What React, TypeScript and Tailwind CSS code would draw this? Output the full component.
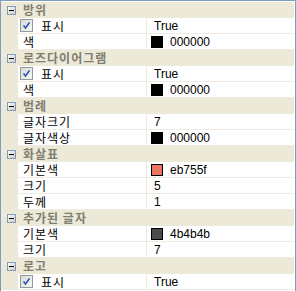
import React from 'react';

type Prop = { name: string; value: string; check?: boolean; color?: string };
type Cat = { title: string; props: Prop[] };

const cats: Cat[] = [
  { title: '방위', props: [{ name: '표시', value: 'True', check: true }, { name: '색', value: '000000', color: '#000000' }] },
  { title: '로즈다이어그램', props: [{ name: '표시', value: 'True', check: true }, { name: '색', value: '000000', color: '#000000' }] },
  { title: '범례', props: [{ name: '글자크기', value: '7' }, { name: '글자색상', value: '000000', color: '#000000' }] },
  {
    title: '화살표',
    props: [
      { name: '기본색', value: 'eb755f', color: '#eb755f' },
      { name: '크기', value: '5' },
      { name: '두께', value: '1' },
    ],
  },
  { title: '추가된 글자', props: [{ name: '기본색', value: '4b4b4b', color: '#4b4b4b' }, { name: '크기', value: '7' }] },
  { title: '로고', props: [{ name: '표시', value: 'True', check: true }] },
];

const font = { fontFamily: '"Noto Sans CJK KR", "Liberation Sans", sans-serif' };

const Minus = () => (
  <svg width="9" height="9" viewBox="0 0 9 9" className="block">
    <defs>
      <linearGradient id="mg" x1="0" y1="0" x2="1" y2="1">
        <stop offset="0" stopColor="#ffffff" />
        <stop offset="1" stopColor="#c9c6b8" />
      </linearGradient>
    </defs>
    <rect x="0.5" y="0.5" width="8" height="8" fill="url(#mg)" stroke="#7f9db9" />
    <rect x="2" y="4" width="5" height="1" fill="#000" />
  </svg>
);

const Check = () => (
  <svg width="13" height="13" viewBox="0 0 13 13" className="block">
    <defs>
      <linearGradient id="cg" x1="0" y1="0" x2="1" y2="1">
        <stop offset="0" stopColor="#dcdcd6" />
        <stop offset="1" stopColor="#f6f6f3" />
      </linearGradient>
    </defs>
    <rect x="0.5" y="0.5" width="12" height="12" fill="url(#cg)" stroke="#8f9aa5" />
    <path d="M3.5 6.5 L5.5 9 L9.5 3.5" fill="none" stroke="#2a52be" strokeWidth="1.6" />
  </svg>
);

export default function App() {
  return (
    <div className="w-[296px] h-[291px] overflow-hidden bg-white border-l border-t border-r border-[#7f9db9] pt-px pr-px" style={font}>
      {cats.map((c) => (
        <div key={c.title}>
          <div className="flex h-4 items-center bg-[#ece9d8]">
            <div className="w-[18px] pl-[6px]">
              <Minus />
            </div>
            <span className="pl-[4px] text-[12px] font-bold leading-none text-[#807d71] tracking-[1px]">{c.title}</span>
          </div>
          {c.props.map((p) => (
            <div key={p.name} className="flex h-4">
              <div className="w-[17px] bg-[#ece9d8]" />
              <div className="flex w-[128px] items-center border-b border-[#efecdf] pl-[2px] text-[12px] leading-none text-black tracking-[1px]">
                {p.check ? (
                  <>
                    <Check />
                    <span className="pl-[8px]">{p.name}</span>
                  </>
                ) : (
                  <span className="pl-[3px]">{p.name}</span>
                )}
              </div>
              <div className="w-px bg-[#ece9d8]" />
              <div
                className="flex flex-1 items-center border-b border-[#efecdf] text-[12px] leading-none text-black"
                style={{ fontFamily: '"Liberation Sans", sans-serif' }}
              >
                {p.color ? (
                  <>
                    <span className="ml-[4px] block h-[12px] w-[12px] border border-black" style={{ backgroundColor: p.color }} />
                    <span className="pl-[7px]">{p.value}</span>
                  </>
                ) : (
                  <span className="pl-[7px]">{p.value}</span>
                )}
              </div>
            </div>
          ))}
        </div>
      ))}
    </div>
  );
}
